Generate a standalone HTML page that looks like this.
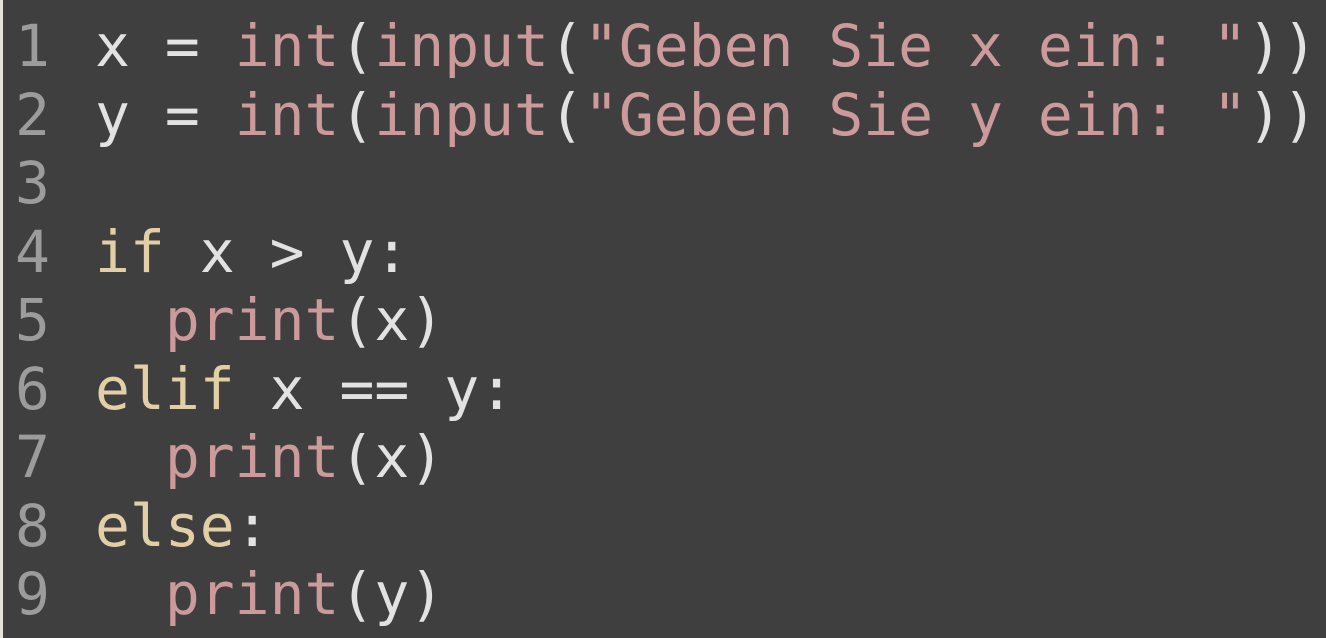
<!DOCTYPE html>
<html><head><meta charset="utf-8"><style>
html,body{margin:0;padding:0;width:1326px;height:638px;overflow:hidden;background:#3f3f3f}
body{border-left:3px solid #e6e4da;box-sizing:border-box}
pre{margin:0;position:absolute;top:12px;font-family:"DejaVu Sans Mono","Liberation Mono",monospace;font-size:58px;line-height:68.5px;color:#e2e2e2;white-space:pre}
.g{left:15px;color:#9c9c9c}
.c{left:95px}
.s{color:#cc9a9a}.k{color:#e3cfa6}
</style></head><body>
<pre class="g">1
2
3
4
5
6
7
8
9</pre>
<pre class="c">x = <span class="s">int</span>(<span class="s">input</span>(<span class="s">"Geben Sie x ein: "</span>))
y = <span class="s">int</span>(<span class="s">input</span>(<span class="s">"Geben Sie y ein: "</span>))

<span class="k">if</span> x &gt; y:
  <span class="s">print</span>(x)
<span class="k">elif</span> x == y:
  <span class="s">print</span>(x)
<span class="k">else</span>:
  <span class="s">print</span>(y)</pre>
</body></html>
